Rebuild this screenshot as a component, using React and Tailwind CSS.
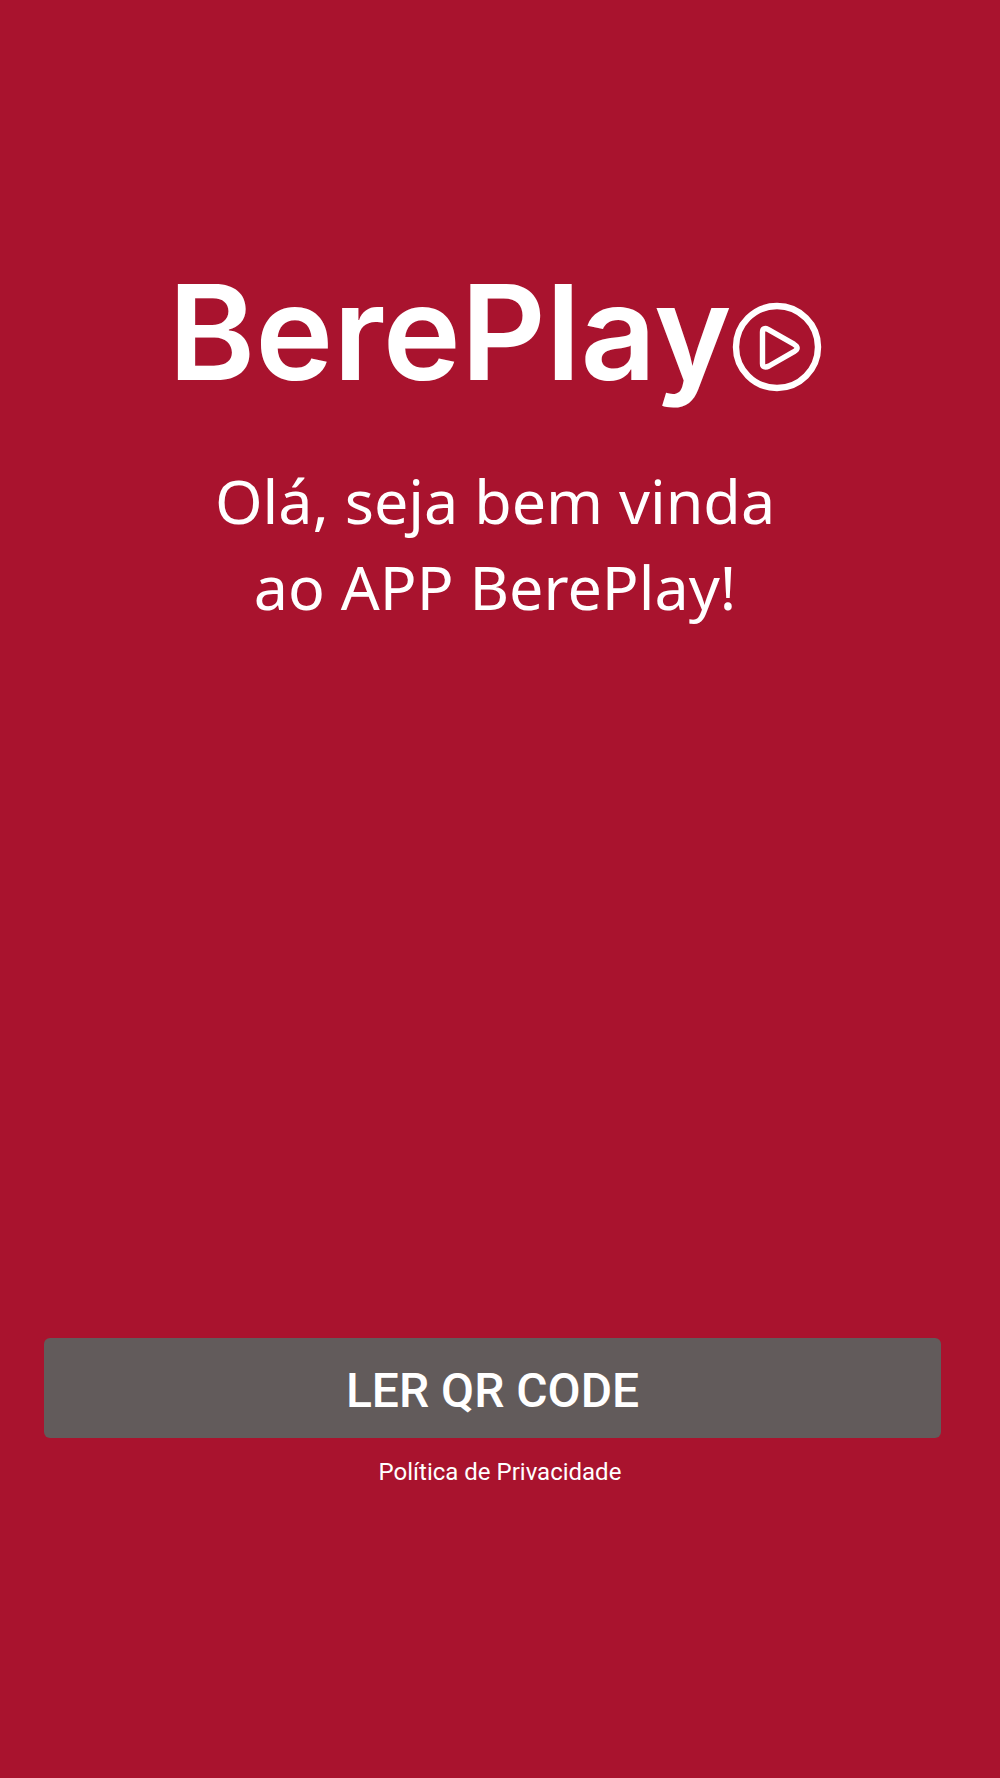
function PlayIcon() {
  return (
    <svg viewBox="0 0 90 90" fill="none" stroke="currentColor" strokeLinejoin="round" className="mt-8 size-[90px]" aria-hidden="true">
      <circle cx="45" cy="45" r="41" strokeWidth="6.4" />
      <path d="M30.5 30 C30.5 26.5 33 25.8 36 27.4 L62 42.2 C66.2 44.8 66.2 47 62 49.6 L37 64 C33 66 30.5 65 30.5 61.5 Z" strokeWidth="5.4" />
    </svg>
  );
}

export default function App() {
  return (
    <div className="flex min-h-screen flex-col bg-[#a9132e] pt-[270px] text-white">
      <header className="flex flex-col items-center pr-2.5">
        <div className="flex items-start">
          <span className="font-[Inter,sans-serif] text-[132px] leading-[124px] font-semibold">BerePlay</span>
          <PlayIcon />
        </div>
        <h1 className="mt-16 text-center font-['Noto_Sans',sans-serif] text-[61px] leading-[86px]">
          Olá, seja bem vinda
          <br />
          ao APP BerePlay!
        </h1>
      </header>
      <main className="mt-auto mb-[290px] flex flex-col items-center">
        <div className="w-full pr-[59px] pl-11">
          <button type="button" className="h-[100px] w-full rounded-md bg-[#625b5b] pt-1.5 font-[Roboto,sans-serif] text-5xl font-medium">
            LER QR CODE
          </button>
        </div>
        <a href="#privacidade" className="mt-[18px] font-[Roboto,sans-serif] text-2xl">Política de Privacidade</a>
      </main>
    </div>
  );
}
